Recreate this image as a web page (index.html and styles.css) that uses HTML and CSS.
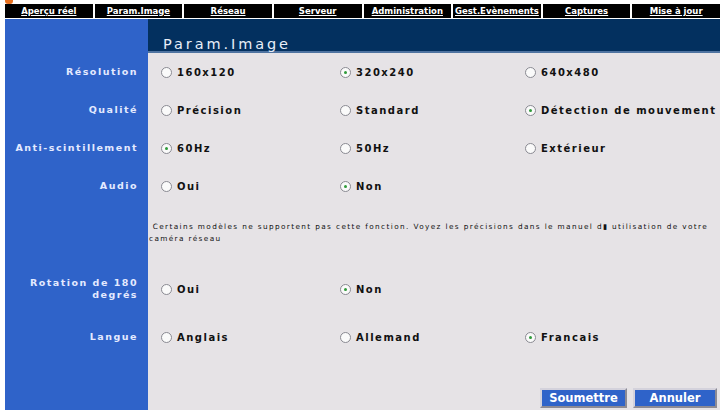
FILE: index.html
```html
<!DOCTYPE html>
<html lang="fr">
<head>
<meta charset="UTF-8">
<title>Param.Image</title>
<link rel="stylesheet" href="styles.css">
</head>
<body>

<div class="logo-strip"><span class="logo-tip"></span></div>

<div class="nav">
  <a href="#">Aperçu réel</a>
  <a href="#">Param.Image</a>
  <a href="#">Réseau</a>
  <a href="#">Serveur</a>
  <a href="#">Administration</a>
  <a href="#">Gest.Evènements</a>
  <a href="#">Captures</a>
  <a href="#">Mise à jour</a>
</div>

<div class="panel">
  <div class="side head-side"></div>
  <div class="title">Param.Image</div>

  <div class="side label">Résolution</div>
  <div class="opts">
    <span class="opt"><i class="radio"></i>160x120</span>
    <span class="opt"><i class="radio on"></i>320x240</span>
    <span class="opt"><i class="radio"></i>640x480</span>
  </div>

  <div class="side label">Qualité</div>
  <div class="opts">
    <span class="opt"><i class="radio"></i>Précision</span>
    <span class="opt"><i class="radio"></i>Standard</span>
    <span class="opt"><i class="radio on"></i>Détection de mouvement</span>
  </div>

  <div class="side label">Anti-scintillement</div>
  <div class="opts">
    <span class="opt"><i class="radio on"></i>60Hz</span>
    <span class="opt"><i class="radio"></i>50Hz</span>
    <span class="opt"><i class="radio"></i>Extérieur</span>
  </div>

  <div class="side label">Audio</div>
  <div class="opts">
    <span class="opt"><i class="radio"></i>Oui</span>
    <span class="opt"><i class="radio on"></i>Non</span>
  </div>

  <div class="side"></div>
  <div class="note">&nbsp;Certains modèles ne supportent pas cette fonction. Voyez les précisions dans le manuel d&#9646; utilisation de votre caméra réseau</div>

  <div class="side label tall">Rotation de 180<br>degrés</div>
  <div class="opts tall">
    <span class="opt"><i class="radio"></i>Oui</span>
    <span class="opt"><i class="radio on"></i>Non</span>
  </div>

  <div class="side label tall">Langue</div>
  <div class="opts tall">
    <span class="opt"><i class="radio"></i>Anglais</span>
    <span class="opt"><i class="radio"></i>Allemand</span>
    <span class="opt"><i class="radio on"></i>Francais</span>
  </div>

  <div class="side"></div>
  <div class="actions">
    <button type="button">Soumettre</button>
    <button type="button">Annuler</button>
  </div>
</div>

</body>
</html>
```

FILE: styles.css
```css
body {
  margin: 0;
  background: #fff;
  font-family: "DejaVu Sans", Verdana, sans-serif;
  overflow: hidden;
}

.logo-strip {
  height: 4px;
  padding-left: 5px;
}

.logo-tip {
  display: block;
  width: 8px;
  height: 4px;
  background: #e8701e;
  border-radius: 0 0 3px 3px;
}

/* top menu */
.nav {
  display: flex;
  gap: 2px;
  margin-left: 5px;
  height: 14px;
  border-bottom: 1px solid #fff;
}

.nav a {
  flex: 1;
  background: #000;
  color: #fff;
  font-size: 8.5px;
  font-weight: bold;
  line-height: 14px;
  text-align: center;
  white-space: nowrap;
}

/* main panel */
.panel {
  display: grid;
  grid-template-columns: 143px 1fr;
  margin-left: 5px;
}

.side {
  background: #2f63c9;
}

.title {
  background: #03305f;
  border-bottom: 2px solid #4f73a0;
  height: 34px;
  box-sizing: border-box;
  padding: 17px 0 0 15px;
  color: #e8eef8;
  font-size: 14.5px;
  letter-spacing: 2.9px;
  line-height: 16px;
}

.label {
  height: 38px;
  display: flex;
  align-items: center;
  justify-content: flex-end;
  text-align: right;
  padding-right: 10px;
  color: #e4eaff;
  font-size: 9.5px;
  font-weight: bold;
  letter-spacing: 1.5px;
  line-height: 12px;
}

.opts,
.note,
.actions {
  background: #e6e3e6;
}

.opts {
  height: 38px;
  display: grid;
  grid-template-columns: 179px 185px 1fr;
  align-items: center;
  padding-left: 13px;
  font-size: 10px;
  font-weight: bold;
  letter-spacing: 1.5px;
  color: #111;
  white-space: nowrap;
}

.tall {
  height: 48px;
}

.opt {
  display: flex;
  align-items: center;
}

.radio {
  width: 9px;
  height: 9px;
  border: 1px solid #8a8a92;
  border-radius: 50%;
  background: #fafafa;
  margin-right: 5px;
  position: relative;
}

.radio.on::after {
  content: "";
  position: absolute;
  left: 3px;
  top: 3px;
  width: 3px;
  height: 3px;
  border-radius: 50%;
  background: #2f9a3a;
}

.note {
  height: 60px;
  box-sizing: border-box;
  padding: 16px 0 0 1px;
  font-size: 7.3px;
  letter-spacing: 1.38px;
  line-height: 12px;
  color: #111;
}

.actions {
  height: 47px;
  display: flex;
  justify-content: flex-end;
  align-items: flex-end;
  gap: 6px;
  padding: 0 3px 2px 0;
}

.actions button {
  height: 20px;
  width: 87px;
  background: #2f63c9;
  color: #fff;
  font-family: "DejaVu Sans", Verdana, sans-serif;
  font-size: 11.5px;
  font-weight: bold;
  border: 2px solid;
  border-color: #d4d2dc #8c8a94 #8c8a94 #d4d2dc;
  padding: 0;
}

.actions button + button {
  width: 84px;
}
```
